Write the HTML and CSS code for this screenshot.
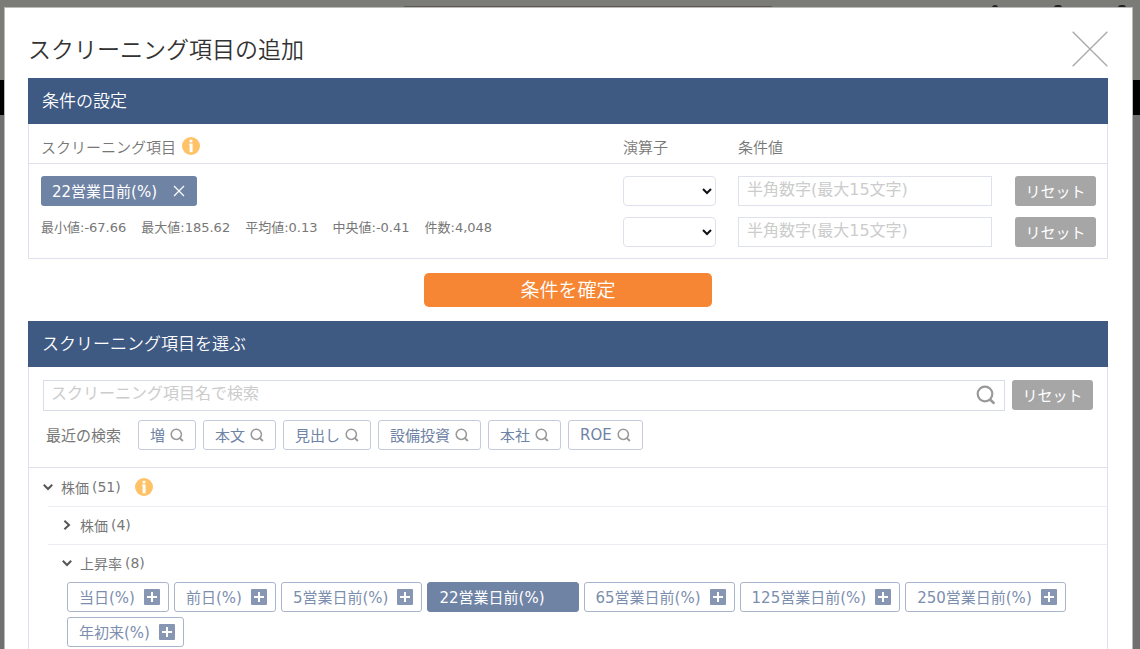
FILE: index.html
```html
<!DOCTYPE html>
<html lang="ja">
<head>
<meta charset="utf-8">
<title>スクリーニング項目の追加</title>
<link rel="stylesheet" href="styles.css">
</head>
<body>
<svg class="sprite" aria-hidden="true">
  <symbol id="search" viewBox="0 0 20 20"><circle cx="9" cy="9" r="7.3" fill="none" stroke="currentColor" stroke-width="2.2"/><path d="M13.8 14.2 18.4 18.6" stroke="currentColor" stroke-width="2.6"/></symbol>
  <symbol id="plus" viewBox="0 0 16 16"><rect width="16" height="16" rx="1" fill="#8796b3"/><path d="M8 3v10M3 8h10" stroke="#fff" stroke-width="2"/></symbol>
  <symbol id="info" viewBox="0 0 18 18"><circle cx="9" cy="9" r="9" fill="#ffc266"/><circle cx="9" cy="4" r="1.6" fill="#fff"/><path d="M7.4 6.6h3.2v8.6H7.6V8h-.6z" fill="#fff"/></symbol>
  <symbol id="down" viewBox="0 0 10 10"><path d="M.8 2.8 5 7 9.2 2.8" fill="none" stroke="currentColor" stroke-width="2"/></symbol>
  <symbol id="right" viewBox="0 0 10 10"><path d="M2.4.8 7 5 2.4 9.2" fill="none" stroke="currentColor" stroke-width="2"/></symbol>
</svg>

<div class="page" aria-hidden="true">
  <div class="page-head"><span class="page-line"></span><span class="dot"></span><span class="dot wide"></span><span class="dot wide"></span></div>
  <div class="page-nav"></div>
</div>

<main class="modal" role="dialog" aria-labelledby="title">
  <header class="modal-head">
    <h1 id="title">スクリーニング項目の追加</h1>
    <button class="close" type="button" aria-label="閉じる"><svg viewBox="0 0 36 36"><path d="M.7.7 35.3 35.3M35.3.7.7 35.3" stroke="#aaa" stroke-width="1.4"/></svg></button>
  </header>

  <section class="panel">
    <h2>条件の設定</h2>
    <table class="conditions">
      <thead>
        <tr>
          <th class="name"><span class="with-info">スクリーニング項目<svg class="info"><use href="#info"/></svg></span></th>
          <th class="operator">演算子</th>
          <th class="value">条件値</th>
          <th class="action"></th>
        </tr>
      </thead>
      <tbody>
        <tr>
          <td class="name"><button class="tag" type="button">22営業日前(%)<svg class="remove" viewBox="0 0 12 12"><path d="M1 1 11 11M11 1 1 11" stroke="#fff" stroke-width="1.2"/></svg></button></td>
          <td><select aria-label="演算子 1"><option></option></select></td>
          <td><input class="field" type="text" placeholder="半角数字(最大15文字)" aria-label="条件値 1"></td>
          <td><button class="reset" type="button">リセット</button></td>
        </tr>
        <tr>
          <td class="name"><div class="stats"><span>最小値:-67.66</span><span>最大値:185.62</span><span>平均値:0.13</span><span>中央値:-0.41</span><span>件数:4,048</span></div></td>
          <td><select aria-label="演算子 2"><option></option></select></td>
          <td><input class="field" type="text" placeholder="半角数字(最大15文字)" aria-label="条件値 2"></td>
          <td><button class="reset" type="button">リセット</button></td>
        </tr>
      </tbody>
    </table>
  </section>

  <button class="confirm" type="button">条件を確定</button>

  <section class="panel">
    <h2>スクリーニング項目を選ぶ</h2>
    <div class="finder">
      <div class="search-row">
        <div class="search-box">
          <input type="text" placeholder="スクリーニング項目名で検索" aria-label="スクリーニング項目名で検索">
          <button type="button" aria-label="検索"><svg><use href="#search"/></svg></button>
        </div>
        <button class="reset" type="button">リセット</button>
      </div>
      <div class="recent">
        <span class="recent-label">最近の検索</span>
        <button type="button">増<svg><use href="#search"/></svg></button>
        <button type="button">本文<svg><use href="#search"/></svg></button>
        <button type="button">見出し<svg><use href="#search"/></svg></button>
        <button type="button">設備投資<svg><use href="#search"/></svg></button>
        <button type="button">本社<svg><use href="#search"/></svg></button>
        <button type="button">ROE<svg><use href="#search"/></svg></button>
      </div>
    </div>
    <div class="tree">
      <div class="node root"><button type="button"><svg><use href="#down"/></svg><span>株価</span><span>(51)</span></button><svg class="info"><use href="#info"/></svg></div>
      <div class="children">
        <div class="node"><button type="button"><svg><use href="#right"/></svg><span>株価</span><span>(4)</span></button></div>
        <div class="node"><button type="button"><svg><use href="#down"/></svg><span>上昇率</span><span>(8)</span></button></div>
        <div class="items">
          <button type="button">当日(%)<svg><use href="#plus"/></svg></button>
          <button type="button">前日(%)<svg><use href="#plus"/></svg></button>
          <button type="button">5営業日前(%)<svg><use href="#plus"/></svg></button>
          <button type="button" class="selected">22営業日前(%)<svg></svg></button>
          <button type="button">65営業日前(%)<svg><use href="#plus"/></svg></button>
          <button type="button">125営業日前(%)<svg><use href="#plus"/></svg></button>
          <button type="button">250営業日前(%)<svg><use href="#plus"/></svg></button>
          <button type="button">年初来(%)<svg><use href="#plus"/></svg></button>
        </div>
      </div>
    </div>
  </section>
</main>
</body>
</html>
```
FILE: styles.css
```css
* { box-sizing: border-box; }

body {
  margin: 0;
  min-height: 100vh;
  overflow: hidden;
  background: #72706e;
  color: #777;
  font-family: "DejaVu Sans", "Noto Sans CJK JP", sans-serif;
  font-size: 15px;
  font-weight: 400;
}

button, input, select {
  margin: 0;
  padding: 0;
  font: inherit;
  color: inherit;
  background: none;
  border: 0;
}

button { cursor: pointer; white-space: nowrap; }
svg { display: block; flex: none; }
.sprite { position: absolute; width: 0; height: 0; }

.page-head {
  display: flex;
  justify-content: flex-end;
  gap: 56px;
  height: 80px;
  padding: 5px 14px 0 0;
  background: #7b7b78;
}
.page-line { width: 368px; height: 3px; margin: 1px 164px 0 0; background: #5c5654; }
.dot { width: 6px; height: 6px; border-radius: 3px; background: #222; }
.dot.wide { width: 8px; }
.page-nav { height: 35px; background: #000; }

.modal {
  position: absolute;
  top: 8px;
  left: 5px;
  right: 8px;
  min-height: calc(100vh - 8px);
  padding: 0 24px 0 23px;
  background: #fff;
  box-shadow: 0 0 0 1px #bbb;
}

.modal-head {
  display: flex;
  align-items: center;
  justify-content: space-between;
  height: 70px;
  padding-top: 12px;
}
h1 { margin: 0; padding-bottom: 3px; font-size: 23px; font-weight: 350; color: #333; }
.close svg { width: 36px; height: 36px; }

.panel { border: 1px solid #dfe2ec; border-top: 0; }
h2 {
  margin: 0 -1px;
  padding: 0 14px;
  background: #3e5982;
  color: #fff;
  font-size: 17px;
  font-weight: 350;
  line-height: 46px;
}

.conditions { width: 100%; table-layout: fixed; border-collapse: collapse; }
.conditions th {
  height: 39px;
  padding: 6px 0 0;
  border-bottom: 1px solid #dfe2ec;
  text-align: left;
  font-weight: 350;
}
.conditions td { padding: 0 0 11px; vertical-align: top; }
.conditions tbody tr:first-child td { padding-top: 12px; }
.conditions .name { padding-left: 12px; }
.operator { width: 115px; }
.value { width: 277px; }
.action { width: 92px; }
.with-info { display: flex; align-items: center; gap: 6px; }
.info { width: 18px; height: 18px; }

.tag {
  display: flex;
  align-items: center;
  gap: 16px;
  height: 30px;
  padding: 0 12px 0 11px;
  border-radius: 3px;
  background: #6f83a5;
  color: #fff;
}
.remove { width: 12px; height: 12px; }
.stats { display: flex; gap: 15px; font-size: 13px; line-height: 22px; white-space: nowrap; }

select {
  display: block;
  width: 93px;
  height: 30px;
  border: 1px solid #dfe2ec;
  border-radius: 4px;
  background: #fff;
  color: #111;
}
.field {
  display: block;
  width: 254px;
  height: 30px;
  padding: 0 8px 3px;
  border: 1px solid #dfe2ec;
  font-size: 16px;
}
::placeholder { color: #ccc; opacity: 1; }
.reset {
  display: block;
  width: 81px;
  height: 30px;
  border-radius: 3px;
  background: #a6a6a6;
  color: #fff;
}

.confirm {
  display: block;
  width: 288px;
  height: 34px;
  margin: 14px auto;
  border-radius: 5px;
  background: #f68633;
  color: #fff;
  font-size: 19px;
  font-weight: 350;
  line-height: 34px;
}

.finder { padding: 13px 14px 17px; border-bottom: 1px solid #dfe2ec; }
.search-row { display: flex; gap: 7px; }
.search-box { display: flex; flex: 1; height: 31px; border: 1px solid #d8dde8; }
.search-box input { flex: 1; padding: 0 7px 3px; font-size: 16px; outline: 0; }
.search-box button { padding: 0 8px; color: #999; }
.search-box svg { width: 20px; height: 20px; }

.recent { display: flex; align-items: center; gap: 7px; margin-top: 9px; }
.recent-label { width: 85px; padding-left: 3px; margin-right: 3px; }
.recent button {
  display: flex;
  align-items: center;
  gap: 5px;
  height: 30px;
  padding: 0 11px;
  border: 1px solid #c3cbdc;
  border-radius: 3px;
  color: #6f83a5;
}
.recent svg { width: 14px; height: 14px; color: #999; }

.node { display: flex; align-items: center; gap: 14px; height: 38px; font-size: 14px; }
.node button { display: flex; align-items: center; gap: 3px; }
.node button svg { width: 10px; height: 10px; margin-right: 5px; color: #555; }
.root { padding-left: 14px; }
.children { margin-left: 19px; }
.children .node { padding-left: 14px; border-top: 1px solid #ebedf2; }

.items { display: flex; flex-wrap: wrap; gap: 5px; padding: 0 20px 2px 19px; }
.items button {
  display: flex;
  align-items: center;
  gap: 9px;
  height: 30px;
  padding: 0 8px 0 11px;
  border: 1px solid #a9b5ca;
  border-radius: 3px;
  color: #7c8eae;
}
.items svg { width: 16px; height: 16px; }
.items .selected { border-color: #6f83a5; background: #6f83a5; color: #fff; }
```
